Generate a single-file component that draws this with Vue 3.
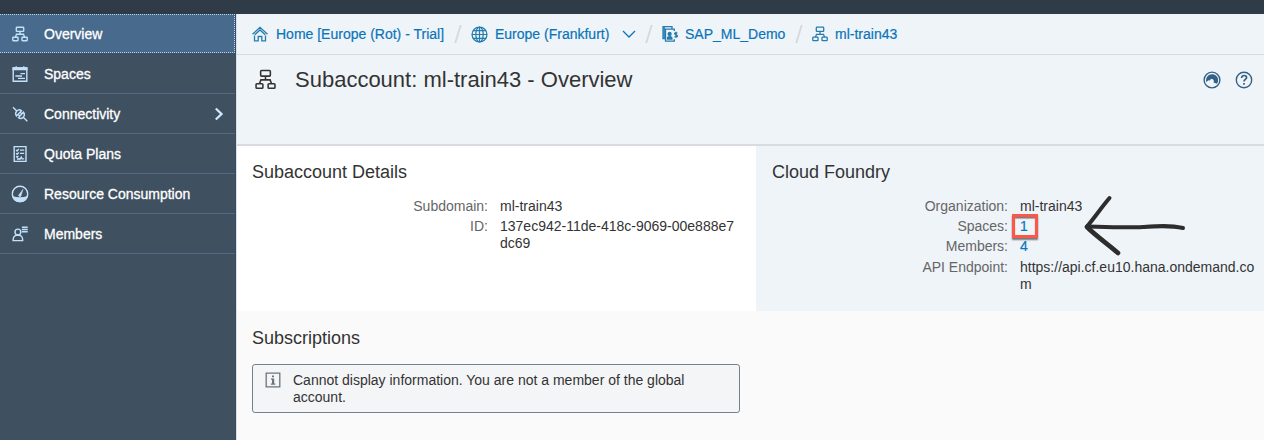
<script setup>
const nav = [
  { label: 'Overview', icon: 'org', active: true },
  { label: 'Spaces', icon: 'board' },
  { label: 'Connectivity', icon: 'plug', arrow: true },
  { label: 'Quota Plans', icon: 'list' },
  { label: 'Resource Consumption', icon: 'gauge' },
  { label: 'Members', icon: 'member' },
]
</script>

<template>
  <svg width="0" height="0" class="defs">
    <symbol id="org" viewBox="0 0 16 16">
      <path d="M5 1.200h6a.7.7 0 0 1 .7.700v2.800a.7.7 0 0 1-.7.700H5a.7.7 0 0 1-.7-.7V1.900A.7.7 0 0 1 5 1.200zM1.400 11.200h4a.6.6 0 0 1 .6.600v2.300a.6.6 0 0 1-.6.600h-4a.6.6 0 0 1-.6-.6v-2.300a.6.6 0 0 1 .6-.6zM10.600 11.200h4a.6.6 0 0 1 .6.600v2.300a.6.6 0 0 1-.6.600h-4a.6.6 0 0 1-.6-.6v-2.300a.6.6 0 0 1 .6-.6zM8 5.400v2.900M3.400 11.200L4.500 8.300h7l1.100 2.900" />
    </symbol>
    <symbol id="board" viewBox="0 0 16 16">
      <path d="M1.200 2h13.600v13.200H1.200zM4.200.3v2.600M11.800.3v2.600M8.500 7.600H13M3.400 10h6.600M6 12.400h7" />
      <path d="M1.200 2h13.600v1.500H1.200z" fill="currentColor" />
    </symbol>
    <symbol id="plug" viewBox="0 0 16 16">
      <path d="M1 1.200l3.700 3.700M11.300 11.300l4 3.900M4.500 10c-2.600-3.400 1.700-8 5-5.300zM6.500 11.600c3.300 2.700 7.600-2 5-5.400zM6 8.300l1.700 1.800M8.200 6.200l1.700 1.700" />
    </symbol>
    <symbol id="list" viewBox="0 0 16 16">
      <path d="M2.200.6h11.800v14.900H2.200zM8 4.100h4.200M8 7.400h4.200M4.100 3.900l1 1 1.700-1.800M4.100 7.200l1 1 1.700-1.800M4.100 10.300l1 1 1.300-1.400M5 13.300l2.300-.6.7.5 1.300-2 .8 1.700h2.100" />
    </symbol>
    <symbol id="gauge" viewBox="0 0 18 18">
      <circle cx="9" cy="9" r="7.700" />
      <path d="M2 11.900c3 1.500 11 1.500 14 0-2.200 6-11.800 6-14 0z" fill="currentColor" />
      <path d="M12 4.300L9.900 11.200a1.300 1.300 0 0 1-2.300-1z" fill="currentColor" stroke-width=".5" />
    </symbol>
    <symbol id="member" viewBox="0 0 16 16">
      <circle cx="5.900" cy="6" r="2.900" />
      <path d="M1.100 14.600c0-3.600 1.500-5 3.200-5.200h3.200c1.700.2 3.200 1.600 3.200 5.200zM9.900 1.300h5.800M9.900 3.500h5.800M9.900 5.700h5.800" />
    </symbol>
    <symbol id="home" viewBox="0 0 16 16">
      <path d="M.5 8.300L8 1.300l7.500 7M2.500 9.400v5.400h3.700v-4.300h3.600v4.300h3.700V9.400M2.800 8.700L8 3.900l5.200 4.800" />
    </symbol>
    <symbol id="globe" viewBox="0 0 18 18">
      <circle cx="9" cy="9" r="7.900" />
      <ellipse cx="9" cy="9" rx="3.900" ry="7.900" />
      <path d="M9 1v16M1 9h16M2.300 5h13.400M2.300 13h13.400" />
    </symbol>
    <symbol id="account" viewBox="0 0 16 16">
      <path d="M10 2.500V.7H1v12h2M12.300 5V3.200H3.500v12h8.800v-2" />
      <path d="M1.300 1h1.600v11H1.300z" fill="currentColor" stroke="none" />
      <circle cx="7.600" cy="8" r="1.500" fill="currentColor" />
      <path d="M5.500 13v-1.200c0-1.500 4.400-1.500 4.400 0V13z" fill="currentColor" />
      <path d="M15.300 7.200c-1.500-1-2.900-.4-2.600.7.200 1.200 2.600.7 2.700 2 .1 1.200-1.700 1.400-2.900.5M14 5.800v6" />
    </symbol>
    <symbol id="feedback" viewBox="0 0 18 18">
      <circle cx="9" cy="9" r="7.900" />
      <path d="M3.300 11C2.300 6.500 5.300 3.200 9 3.200c3.500 0 6.100 2.600 6.100 5.900 0 1.600-.4 2.700-1.100 3.600l-3.400-1.300c.8-2-.2-3.500-1.800-3.500-1.300 0-1.800.7-1.800 1.700l-1.500-.4z" fill="currentColor" stroke="none" />
    </symbol>
    <symbol id="help" viewBox="0 0 18 18">
      <circle cx="9" cy="9" r="7.700" />
      <path d="M6.600 7c0-3.300 5-3.200 5-.4C11.600 8.500 9 8.400 9 10.600M9 12v1.800" stroke-width="1.700" />
    </symbol>
    <symbol id="info" viewBox="0 0 16 16">
      <path d="M1.200 1.200h13.600v13.600H1.200z" />
      <path d="M7 3.400h2v1.800H7zM6 6.600h3.200v5h1.100v1.100H5.800v-1.100H7V7.700H6z" fill="currentColor" stroke="none" />
    </symbol>
  </svg>

  <div class="page">
    <header class="topbar"></header>
    <div class="body">
      <nav class="side">
        <div v-for="n in nav" :key="n.label" class="item" :class="{ active: n.active }">
          <svg class="ic" :class="n.icon"><use :href="'#' + n.icon" /></svg>
          <span>{{ n.label }}</span>
          <svg v-if="n.arrow" class="arrow" viewBox="0 0 10 14"><path d="M1.800 1.500L7.500 7l-5.700 5.500" /></svg>
        </div>
      </nav>
      <main class="main">
        <div class="crumbs">
          <a class="crumb c1"><svg class="ic"><use href="#home" /></svg><span>Home [Europe (Rot) - Trial]</span></a>
          <i class="slash"></i>
          <a class="crumb c2"><svg class="ic globe"><use href="#globe" /></svg><span>Europe (Frankfurt)</span>
            <svg class="chev" viewBox="0 0 14 8"><path d="M1 1l6 6 6-6" /></svg></a>
          <i class="slash"></i>
          <a class="crumb c3"><svg class="ic"><use href="#account" /></svg><span>SAP_ML_Demo</span></a>
          <i class="slash"></i>
          <a class="crumb c4"><svg class="ic"><use href="#org" /></svg><span>ml-train43</span></a>
        </div>
        <div class="head">
          <svg class="hicon"><use href="#org" /></svg>
          <h1>Subaccount: ml-train43 - Overview</h1>
          <div class="tools">
            <svg><use href="#feedback" /></svg>
            <svg><use href="#help" /></svg>
          </div>
        </div>
        <div class="panels">
          <section class="panel left">
            <h2>Subaccount Details</h2>
            <dl>
              <dt>Subdomain:</dt><dd>ml-train43</dd>
              <dt>ID:</dt><dd>137ec942-11de-418c-9069-00e888e7<br>dc69</dd>
            </dl>
          </section>
          <section class="panel right">
            <h2>Cloud Foundry</h2>
            <dl>
              <dt>Organization:</dt><dd>ml-train43</dd>
              <dt>Spaces:</dt><dd class="link">1<b class="mark"></b></dd>
              <dt>Members:</dt><dd class="link">4</dd>
              <dt class="api">API Endpoint:</dt><dd class="api">https://api.cf.eu10.hana.ondemand.co<br>m</dd>
            </dl>
            <svg class="pointer" viewBox="0 0 104 64">
              <path d="M4 31.500C22 32 43 33 60 32c14-1 27-2 40 1" />
              <path d="M26.500 3C18 13 12 22 4 31.500" />
              <path d="M4 32c9 9 22 18 31 26" stroke-width="4.600" />
            </svg>
          </section>
        </div>
        <section class="subs">
          <h2>Subscriptions</h2>
          <div class="msg">
            <svg><use href="#info" /></svg>
            <p>Cannot display information. You are not a member of the global<br>account.</p>
          </div>
        </section>
      </main>
    </div>
  </div>
</template>

<style>
body { margin: 0; }
</style>

<style scoped>
* { box-sizing: border-box; }
svg { fill: none; stroke: currentColor; stroke-width: 1.300; flex: none; display: block; }
.defs { position: absolute; }
.page { width: 1264px; height: 440px; overflow: hidden; display: flex; flex-direction: column; font: 14px/17px "Liberation Sans", Arial, sans-serif; color: #333; background: #fafafa; white-space: nowrap; }
.topbar { height: 14px; background: #2f3c48; flex: none; }
.body { display: flex; flex: 1; }
.side { width: 236px; background: #3f5161; border-right: 1px solid #3a4b5b; flex: none; }
.item { height: 40px; display: flex; align-items: center; padding: 1px 0 0 12px; border-bottom: 1px solid #536b82; color: #fff; -webkit-text-stroke: .3px #fff; }
.item.active { background: #486a8c; border: 1px dotted #b5d3ee; border-left: 0; padding-top: 1px; height: 39px; margin-bottom: 1px; }
.ic { width: 16px; height: 16px; }
.item .ic { color: #c3e1fb; margin-right: 16px; stroke-width: 1.400; }
.item .gauge { width: 18px; height: 18px; margin: 0 15px 0 -1px; }
.arrow { width: 10px; height: 14px; margin-left: auto; margin-right: 11px; color: #cde8ff; stroke-width: 2.300; }
.main { flex: 1; border-left: 1px solid #d9e0e8; display: flex; flex-direction: column; }
.crumbs { height: 41px; flex: none; display: flex; align-items: center; padding-left: 15px; background: #eff4f9; border-bottom: 1px solid #d7dce1; }
.crumb { display: flex; align-items: center; gap: 8px; flex: none; color: #0a74b9; -webkit-text-stroke: .2px #0a74b9; }
.crumb .ic { color: #267cad; }
.crumb .globe { width: 17px; height: 17px; margin-right: -.5px; }
.c1 { width: 200px; } .c2 { width: 173px; } .c3 { width: 131.500px; }
.c3, .c4 { gap: 7px; }
.chev { width: 14px; height: 8px; margin-left: auto; margin-right: 8px; }
.slash { width: 2px; height: 18px; flex: none; background: #d6dadd; transform: skewX(-17deg); margin: 0 12px 0 4.500px; }
.head { height: 91px; flex: none; display: flex; align-items: flex-start; background: #eff4f9; border-bottom: 2px solid #d8dce0; padding: 14px 11px 0 18px; }
.hicon { width: 21px; height: 21px; stroke-width: 1.200; }
h1 { font: 22px/24px "Liberation Sans", Arial, sans-serif; margin: -1px 0 0 19px; }
.tools { margin: 2px 0 0 auto; display: flex; gap: 14px; color: #346187; }
.tools svg { width: 18px; height: 18px; stroke-width: 1.400; }
.panels { display: flex; height: 165px; flex: none; }
.panel { padding: 14px 0 0 15px; background: #fff; width: 519px; flex: none; }
.right { width: 508px; background: #eff4f9; position: relative; padding-left: 16px; }
h2 { font: 18px/24px "Liberation Sans", Arial, sans-serif; margin: 0; }
dl { display: grid; grid-template-columns: 236px auto; column-gap: 12px; row-gap: 3px; margin: 14px 0 0; justify-content: start; line-height: 17px; }
dt { color: #666; text-align: right; }
dd { margin: 0; position: relative; }
.api { padding-top: 1px; }
.link { color: #0a74b9; -webkit-text-stroke: .2px #0a74b9; }
.mark { position: absolute; left: -8px; top: -4px; width: 26px; height: 24px; border: 3px solid #fb5849; box-shadow: 0 2px 1.500px #7a7a7a, inset 0 1.500px 1px #777; }
.pointer { position: absolute; left: 327px; top: 49px; width: 104px; height: 64px; color: #2d2d2d; stroke-width: 4; stroke-linecap: round; stroke-linejoin: round; }
.subs { padding: 15px 0 0 15px; }
.msg { width: 488px; height: 49px; margin-top: 14px; border: 1px solid #758188; border-radius: 3px; background: #f4f5f7; display: flex; padding: 7px 0 0 12px; }
.msg svg { width: 16px; height: 16px; color: #68757d; }
p { margin: 0 0 0 12px; }
</style>
